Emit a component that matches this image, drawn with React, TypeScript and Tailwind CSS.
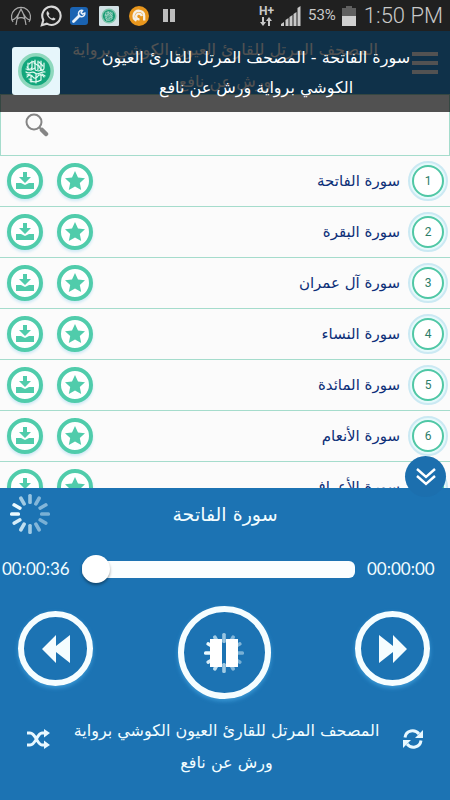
import type { ReactNode } from "react";

const surahs = ["الفاتحة", "البقرة", "آل عمران", "النساء", "المائدة", "الأنعام", "الأعراف"];

// opacity of each spoke, clockwise from the top
const spokes = [0.6, 0.5, 0.5, 0.45, 0.45, 0.5, 0.65, 0.8, 0.9, 1, 1, 0.65];

const Spinner = ({ className }: { className: string }) => (
  <svg viewBox="0 0 40 40" className={className} aria-hidden="true">
    {spokes.map((opacity, i) => (
      <rect
        key={i}
        x="18.2"
        y="0"
        width="3.6"
        height="10"
        rx="1.5"
        fill="#eafaff"
        opacity={opacity}
        transform={`rotate(${i * 30} 20 20)`}
      />
    ))}
  </svg>
);

const Emblem = ({ className }: { className: string }) => (
  <svg viewBox="0 0 48 48" className={className} aria-hidden="true">
    <rect width="48" height="48" rx="3" fill="#e6f6fb" />
    <circle cx="24" cy="24" r="18" fill="#8ed8bd" />
    <circle cx="24" cy="24" r="14.5" fill="#13a77c" />
    <g fill="none" stroke="#e4fbf2" strokeWidth="1.2" strokeLinecap="round">
      <path d="M15 20c2 3 4 3 5 0m-4-4v7m4-9v8m3-9v9c0 2 3 2 3 0v-8m3 0v8c1 2 3 1 3-1v-5" />
      <path d="M14 25c3 3 6-2 9 1s6-2 10-1m-18 5c2-3 5-2 6 0s4 1 5-1 5-1 6 1m-14 4c3 1 8 1 11-1m-7-17 5 3m-8 4 4-2m3 3 5-1m-12 5v7m5-8v9m5-9v6" />
      <path d="M17 17c2-2 4-3 6-2m4 0 4 4M14 22l4 1m12 4 3 2M17 32l3 1m-5-5 3-1m9-8 2 4" />
    </g>
  </svg>
);

const RoundButton = ({ label, children }: { label: string; children: ReactNode }) => (
  <button
    aria-label={label}
    className="flex size-9 items-center justify-center rounded-full border-4 border-[#50ccab] bg-white text-[#50ccab] shadow-[0_2px_3px_#cde9f5]"
  >
    {children}
  </button>
);

const SkipButton = ({ label, path }: { label: string; path: string }) => (
  <button
    aria-label={label}
    className="mt-[5px] flex size-[75px] items-center justify-center rounded-full border-[6px] border-[#f5fdff] shadow-[0_2px_4px_#3b9bd8]"
  >
    <svg viewBox="0 0 28 28" className="size-7" fill="#f5fdff">
      <path d={path} />
    </svg>
  </button>
);

const StatusBar = () => (
  <div className="flex h-[31px] shrink-0 items-center bg-[#202020] pr-[7px] pl-[10px] text-[#c8c8c8]">
    <div className="flex flex-1 items-center gap-2">
      <svg viewBox="0 0 22 22" className="size-[22px]" fill="none" stroke="#a9a9a9" strokeWidth="1.2">
        <path d="M3 17a9.500 9.500 0 1 1 16 0" />
        <path d="M1.500 15C6 15 8.500 10 11 4c2.500 6 5 11 9.500 11M6 20c1-7 2.500-12 5-16 2.500 4 4 9 5 16M7 14c3-2 5-2 8 0" />
      </svg>
      <svg viewBox="0 0 24 24" className="size-[22px]" fill="none" stroke="#d8d8d8" strokeWidth="2.3">
        <path d="m2 22 1.600-5.600A10 10 0 1 1 7.400 20.400Z" />
        <path
          d="M8.500 6.500c-3 2-.5 6 2 8.200s5.500 3 6.500.3l-2.500-1.500-1.300 1.300c-1.800-.6-3.200-2-4-3.800l1.200-1.200Z"
          fill="#d8d8d8"
          stroke="none"
        />
      </svg>
      <svg viewBox="0 0 18 18" className="size-[18px]">
        <rect width="18" height="18" rx="3" fill="#1a63b2" />
        <path d="m3.500 14.500 5.500-5.500" stroke="#e8f1fa" strokeWidth="2.800" strokeLinecap="round" />
        <path d="M12.500 3.500A3.200 3.200 0 1 0 14.800 6l-2.400 1.200-1.300-1.300Z" fill="none" stroke="#e8f1fa" strokeWidth="1.500" />
      </svg>
      <span className="pl-[3px]">
        <Emblem className="size-5 opacity-90" />
      </span>
      <svg viewBox="0 0 20 20" className="ml-[2px] size-5">
        <circle cx="10" cy="10" r="10" fill="#e8961c" />
        <path
          d="M7.500 14.800A5.300 5.300 0 1 1 15.200 10v4.500M10.500 13.200a2.800 2.800 0 1 1 2.200-3"
          fill="none"
          stroke="#f5f0e6"
          strokeWidth="2.300"
        />
      </svg>
      <svg viewBox="0 0 12 13" className="ml-[6px] h-[13px] w-3" fill="#bdbdbd">
        <path d="M0 0h5v13H0zM7 0h5v13H7z" />
      </svg>
    </div>
    <div className="flex items-center gap-[6px]">
      <div className="flex flex-col items-center">
        <span className="font-['Roboto'] text-[12px] leading-3 font-bold">H+</span>
        <svg viewBox="0 0 12 9" className="h-[9px] w-3" fill="currentColor">
          <path d="M2 0h2v5h2L3 9 0 5h2zM8 9h2V4h2L9 0 6 4h2z" />
        </svg>
      </div>
      <svg viewBox="0 0 20 20" className="mx-px size-5" fill="currentColor">
        <path d="M0 20v-2l3-2v4zM4.500 20v-6l3-2v8zM8.500 20v-9l3-2v11zM12.500 20V8l3-2v14zM16.500 20V2l3-2v20z" />
      </svg>
      <span className="font-['Roboto'] text-[15px]">53%</span>
      <svg viewBox="0 0 14 20" className="h-5 w-[14px]">
        <path d="M4 0h6v2h4v9H0V2h4z" fill="#606060" />
        <path d="M0 10h14v10H0z" fill="#d0d0d0" />
      </svg>
      <span className="pl-[2px] font-['Roboto'] text-[22px] leading-7 font-light">1:50 PM</span>
    </div>
  </div>
);

const Toast = () => (
  <div role="status" className="absolute inset-x-0 top-0 flex h-[81px] bg-black/68">
    <div className="shrink-0 pt-4 pl-3">
      <Emblem className="size-12" />
    </div>
    <p dir="rtl" className="flex-1 pt-3 pr-[34px] pl-9 text-center text-[16px] leading-[30px] text-white">
      سورة الفاتحة - المصحف المرتل للقارئ العيون
      <br />
      الكوشي برواية ورش عن نافع
    </p>
  </div>
);

const SurahRow = ({ name, index }: { name: string; index: number }) => (
  <li className="flex h-[51px] shrink-0 items-center border-b border-[#a5dccc] pr-[2px] pl-[7px]">
    <div className="flex gap-[14px]">
      <RoundButton label="تحميل">
        <svg viewBox="0 0 20 18" className="h-[18px] w-5" fill="currentColor">
          <path d="M8 0h4v5h4l-6 6-6-6h4z" />
          <path d="M1 11h5l4 2 4-2h5v6H1z" />
        </svg>
      </RoundButton>
      <RoundButton label="مفضلة">
        <svg viewBox="0 0 20 20" className="size-5" fill="currentColor">
          <path d="m10 0 3 6.500 7 .8-5.200 4.800L16.200 19 10 15.600 3.800 19l1.400-6.900L0 7.300l7-.8z" />
        </svg>
      </RoundButton>
    </div>
    <span dir="rtl" className="flex-1 pr-2 text-[15px] text-[#0d2f78]">
      سورة {name}
    </span>
    <span className="flex size-10 items-center justify-center rounded-full border-2 border-[#cbe9f3] bg-[#e6f9fb]">
      <span className="flex size-8 items-center justify-center rounded-full border-2 border-[#50c7a5] bg-white font-['Roboto'] text-[12px] text-[#2c7d68]">
        {index}
      </span>
    </span>
  </li>
);

const Player = () => (
  <section className="relative flex h-[312px] shrink-0 flex-col bg-[#1c73b3] text-[#f2fdff]">
    <button
      aria-label="إخفاء المشغل"
      className="absolute -top-8 right-1 flex size-[41px] items-center justify-center rounded-full bg-[#1c6fae]"
    >
      <svg viewBox="0 0 20 20" className="size-5" fill="none" stroke="#fff" strokeWidth="2.400">
        <path d="m1 2 9 8 9-8M1 9l9 8 9-8" />
      </svg>
    </button>

    <div className="flex h-[52px] items-center pl-[10px]">
      <Spinner className="size-10" />
      <h2 dir="rtl" className="flex-1 pr-[50px] text-center text-[19px]">
        سورة الفاتحة
      </h2>
    </div>

    {/* Seek bar */}
    <div className="flex h-[58px] items-center font-['Lato'] text-[17px]">
      <span className="w-[82px] pl-[2px]">00:00:36</span>
      <input
        type="range"
        aria-label="موضع التشغيل"
        min={0}
        max={100}
        defaultValue={0}
        className="h-[17px] min-w-0 flex-1 appearance-none rounded-md bg-[#fafeff] [&::-webkit-slider-thumb]:size-7 [&::-webkit-slider-thumb]:appearance-none [&::-webkit-slider-thumb]:rounded-full [&::-webkit-slider-thumb]:bg-white [&::-webkit-slider-thumb]:shadow-[0_2px_3px_#00000060]"
      />
      <span className="w-[95px] pl-3">00:00:00</span>
    </div>

    <div className="flex h-[108px] items-start justify-between pt-2 pr-5 pl-[18px]">
      <SkipButton label="السابق" path="M14 0v11L28 0v28L14 17v11L0 14z" />
      <button
        aria-label="إيقاف مؤقت"
        className="relative flex size-[93px] items-center justify-center rounded-full border-[6px] border-[#f5fdff] shadow-[0_2px_4px_#3b9bd8]"
      >
        <Spinner className="size-10" />
        <svg viewBox="0 0 28 28" className="absolute size-7" fill="#fff">
          <path d="M0 0h12v28H0zM16 0h12v28H16z" />
        </svg>
      </button>
      <SkipButton label="التالي" path="M14 0v11L0 0v28l14-11v11l14-14z" />
    </div>

    <div className="flex flex-1 items-start justify-between pt-[9px] pr-[27px] pl-[26px]">
      <button aria-label="عشوائي" className="pt-[14px]">
        <svg viewBox="0 0 24 20" className="h-5 w-6" fill="none" stroke="#e8f8ff" strokeWidth="3">
          <path d="M1 4h3c6 0 7 12 12 12h3M1 16h3c6 0 7-12 12-12h3" />
          <path d="m18 0 6 4-6 4.500zM18 11.500l6 4.500-6 4z" fill="#e8f8ff" stroke="none" />
        </svg>
      </button>
      <p dir="rtl" className="text-center text-[16px] leading-8">
        المصحف المرتل للقارئ العيون الكوشي برواية
        <br />
        ورش عن نافع
      </p>
      <button aria-label="تكرار" className="pt-[14px]">
        <svg viewBox="0 0 20 20" className="size-5" fill="none" stroke="#e8f8ff" strokeWidth="3">
          <path d="M2 8.500C3 1 12 0 16 5M18 11.500C17 19 8 20 4 15" />
          <path d="M20 1v8h-8zM0 19v-8h8z" fill="#e8f8ff" stroke="none" />
        </svg>
      </button>
    </div>
  </section>
);

export default function App() {
  return (
    <div className="flex h-screen flex-col overflow-hidden bg-[#fbfbfb] font-['DejaVu_Sans',sans-serif]">
      <StatusBar />
      <div className="relative shrink-0">
        <header className="flex h-[63px] bg-[#2f9ae4]">
          <h1 dir="rtl" className="flex-1 pt-[3px] pl-[38px] text-center text-[16px] leading-8 text-white">
            المصحف المرتل للقارئ العيون الكوشي برواية
            <br />
            ورش عن نافع
          </h1>
          <button aria-label="القائمة" className="mr-3 flex w-[26px] flex-col gap-[5px] pt-[21px]">
            <span className="h-1 w-full bg-white" />
            <span className="h-1 w-full bg-white" />
            <span className="h-1 w-full bg-white" />
          </button>
        </header>
        <label className="flex h-[62px] items-center border border-[#a5dccc] pl-6">
          <svg viewBox="0 0 24 24" className="size-6" fill="none" stroke="#858585">
            <circle cx="9" cy="9" r="7.500" strokeWidth="2" />
            <path d="m14 14 3 3" strokeWidth="2" />
            <path d="m17 17 4 4" strokeWidth="4.500" strokeLinecap="round" />
          </svg>
          <input type="search" aria-label="بحث" dir="rtl" className="min-w-0 flex-1 px-3 outline-none" />
        </label>
        <Toast />
      </div>
      <ul className="flex min-h-0 flex-1 flex-col overflow-hidden">
        {surahs.map((name, i) => (
          <SurahRow key={name} name={name} index={i + 1} />
        ))}
      </ul>
      <Player />
    </div>
  );
}
